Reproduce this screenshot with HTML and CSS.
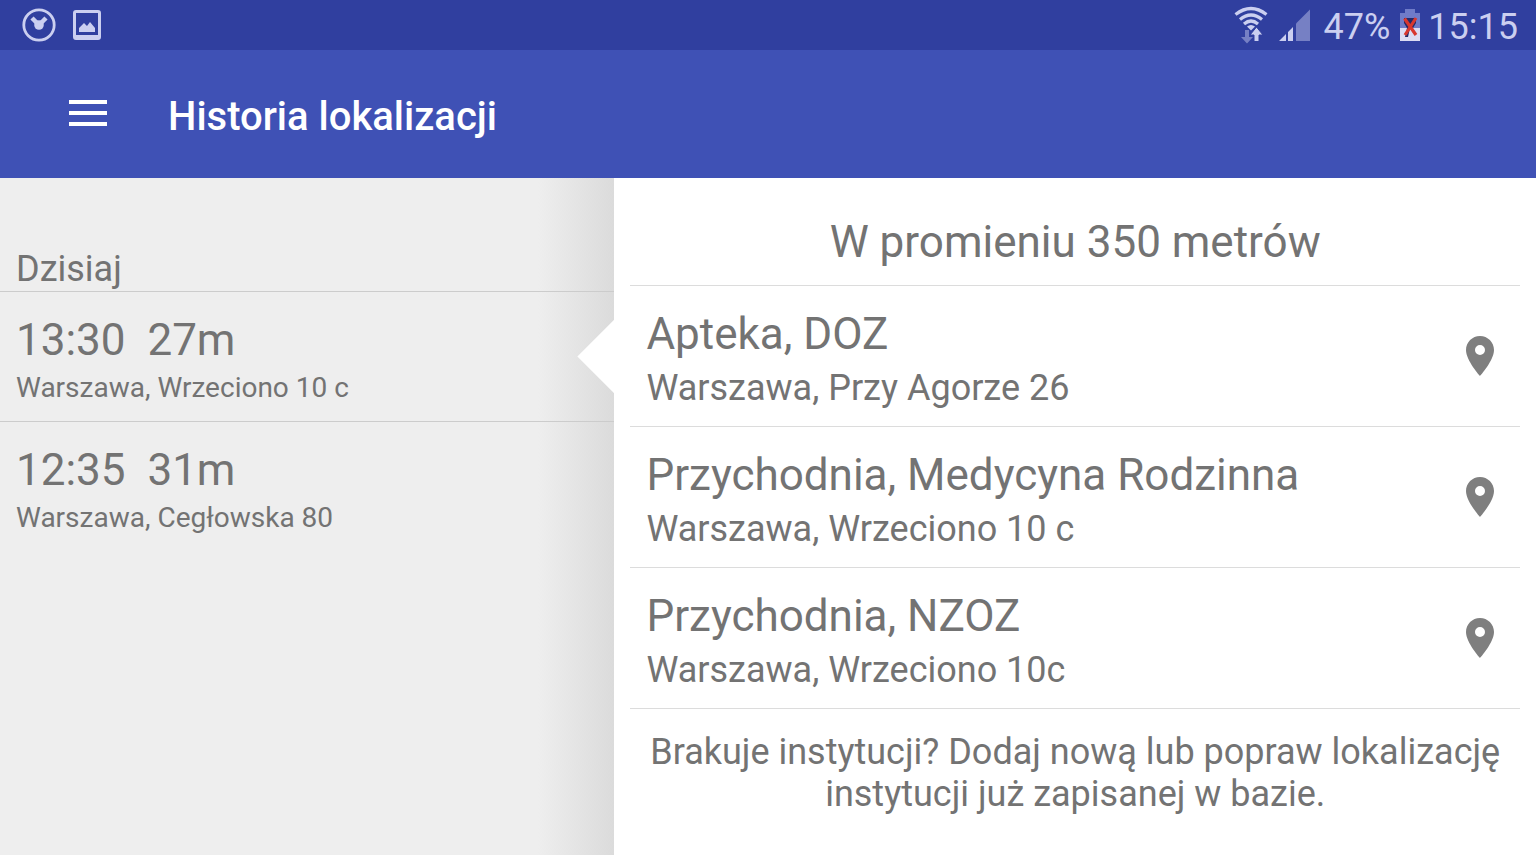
FILE: index.html
```html
<!DOCTYPE html>
<html lang="pl">
<head>
<meta charset="utf-8">
<meta name="viewport" content="width=device-width, initial-scale=1">
<title>Historia lokalizacji</title>
<link rel="stylesheet" href="styles.css">
</head>
<body>
<div class="status-bar">
  <div class="status-group status-notifications">
    <svg class="status-icon" width="34" height="34" viewBox="0 0 34 34" aria-hidden="true">
      <circle cx="17" cy="17" r="15.2" fill="none" stroke="currentColor" stroke-width="2.8"/>
      <path d="M10 10l7 7M24 10l-7 7" stroke="currentColor" stroke-width="4.500" fill="none"/>
      <circle cx="17" cy="17" r="4.800" fill="currentColor"/>
    </svg>
    <svg class="status-icon" width="28" height="32" viewBox="0 0 28 32" aria-hidden="true">
      <path fill="currentColor" fill-rule="evenodd" d="M3 1h22a3 3 0 0 1 3 3v24a3 3 0 0 1-3 3H3a3 3 0 0 1-3-3V4a3 3 0 0 1 3-3zm0 3v22h22V4z"/>
      <path fill="currentColor" d="M6 23v-4l5-5 3 3 3-4 5 6v4z"/>
    </svg>
  </div>
  <div class="status-group status-system">
    <svg class="wifi" width="36" height="38" viewBox="0 0 36 38" aria-hidden="true">
      <g fill="none" stroke="currentColor" stroke-width="3.200">
        <path d="M2.500 8.500Q18-3.500 33.500 8.500"/>
        <path d="M7 13.500Q18 4.500 29 13.500"/>
        <path d="M11 18Q18 12 25 18"/>
      </g>
      <path fill="currentColor" d="M14 20.500q4-3 8 0L18 24.500z"/>
      <path fill="#7680c4" d="M12 24h4v7h4l-6 6.500L8 31h4z"/>
      <path fill="currentColor" stroke="#303f9f" stroke-width="1" d="M21 35.500V29h-4l6.500-8 6.500 8h-4v6.500z"/>
    </svg>
    <svg class="signal" width="32" height="32" viewBox="0 0 32 32" aria-hidden="true">
      <path fill="currentColor" d="M0 32l7-7v7zM9 32V23l5-5V32z"/>
      <path fill="#7680c4" d="M17 32V14.500L31 .500V32z"/>
    </svg>
    <span class="battery-level">47%</span>
    <svg class="battery" width="20" height="32" viewBox="0 0 20 32" aria-hidden="true">
      <path fill="#6f7bc8" d="M5 0h10v4h5v28H0V4h5z"/>
      <path fill="#dcdcf2" d="M0 19h20v13H0z"/>
      <path fill="#252a68" d="M4 9h12v5l-3 5H7L4 14zM7 19h3l-2 9H5z"/>
      <path d="M4.500 9.500L16 26M16 9L5 26" fill="none" stroke="#d8372f" stroke-width="3.200"/>
    </svg>
    <time class="clock">15:15</time>
  </div>
</div>

<header class="app-bar">
  <button class="menu-button" type="button" aria-label="Menu">
    <svg width="38" height="28" viewBox="0 0 38 28" aria-hidden="true">
      <path fill="currentColor" d="M0 0h38v4H0zM0 11h38v4H0zM0 22h38v4H0z"/>
    </svg>
  </button>
  <h1 class="app-title">Historia lokalizacji</h1>
</header>

<main class="panes">
  <section class="history">
    <h2 class="day">Dzisiaj</h2>
    <ul class="list">
      <li class="visit visit-selected">
        <button class="visit-button" type="button">
          <span class="primary">13:30&nbsp; 27m</span>
          <span class="caption">Warszawa, Wrzeciono 10 c</span>
        </button>
      </li>
      <li class="visit">
        <button class="visit-button" type="button">
          <span class="primary">12:35&nbsp; 31m</span>
          <span class="caption">Warszawa, Cegłowska 80</span>
        </button>
      </li>
    </ul>
  </section>

  <section class="nearby">
    <h2 class="nearby-title">W promieniu 350 metrów</h2>
    <ul class="list">
      <li class="place">
        <div class="place-text">
          <span class="primary">Apteka, DOZ</span>
          <span class="secondary">Warszawa, Przy Agorze 26</span>
        </div>
        <button class="pin-button" type="button" aria-label="Apteka, DOZ">
          <svg width="28" height="40" viewBox="0 0 28 40" aria-hidden="true">
            <path fill="currentColor" fill-rule="evenodd" d="M14 0C6.270 0 0 6.270 0 14c0 10.500 14 26 14 26s14-15.500 14-26C28 6.270 21.730 0 14 0zm0 19a5 5 0 1 1 0-10 5 5 0 0 1 0 10z"/>
          </svg>
        </button>
      </li>
      <li class="place">
        <div class="place-text">
          <span class="primary">Przychodnia, Medycyna Rodzinna</span>
          <span class="secondary">Warszawa, Wrzeciono 10 c</span>
        </div>
        <button class="pin-button" type="button" aria-label="Przychodnia, Medycyna Rodzinna">
          <svg width="28" height="40" viewBox="0 0 28 40" aria-hidden="true">
            <path fill="currentColor" fill-rule="evenodd" d="M14 0C6.270 0 0 6.270 0 14c0 10.500 14 26 14 26s14-15.500 14-26C28 6.270 21.730 0 14 0zm0 19a5 5 0 1 1 0-10 5 5 0 0 1 0 10z"/>
          </svg>
        </button>
      </li>
      <li class="place">
        <div class="place-text">
          <span class="primary">Przychodnia, NZOZ</span>
          <span class="secondary">Warszawa, Wrzeciono 10c</span>
        </div>
        <button class="pin-button" type="button" aria-label="Przychodnia, NZOZ">
          <svg width="28" height="40" viewBox="0 0 28 40" aria-hidden="true">
            <path fill="currentColor" fill-rule="evenodd" d="M14 0C6.270 0 0 6.270 0 14c0 10.500 14 26 14 26s14-15.500 14-26C28 6.270 21.730 0 14 0zm0 19a5 5 0 1 1 0-10 5 5 0 0 1 0 10z"/>
          </svg>
        </button>
      </li>
    </ul>
    <p class="hint">Brakuje instytucji? Dodaj nową lub popraw lokalizację instytucji już zapisanej w bazie.</p>
  </section>
</main>
</body>
</html>
```
FILE: styles.css
```css
* {
  box-sizing: border-box;
}

body {
  margin: 0;
  min-height: 100vh;
  display: flex;
  flex-direction: column;
  font-family: Roboto, "Liberation Sans", sans-serif;
  color: #737373;
  background: #fff;
}

h1,
h2,
p {
  margin: 0;
  font-weight: 400;
}

svg {
  display: block;
  flex: none;
}

button {
  border: 0;
  padding: 0;
  background: none;
  color: inherit;
  font: inherit;
  text-align: left;
  cursor: pointer;
}

.status-bar {
  display: flex;
  justify-content: space-between;
  align-items: center;
  height: 50px;
  padding: 0 18px 0 22px;
  background: #303f9f;
  color: #cbcff0;
  font-size: 36px;
  line-height: 48px;
}

.status-group {
  display: flex;
  align-items: center;
}

.status-notifications {
  gap: 17px;
}

.signal {
  margin: 0 13px 0 10px;
}

.battery {
  margin: 0 8px 0 10px;
}

.battery-level,
.clock {
  padding-top: 4px;
}

.app-bar {
  display: flex;
  align-items: center;
  gap: 61px;
  height: 128px;
  padding: 0 69px;
  background: #3f51b5;
  color: #fff;
}

.app-title {
  padding-top: 6px;
  font-size: 40px;
  line-height: 48px;
  font-weight: 500;
}

.panes {
  flex: 1;
  display: grid;
  grid-template-columns: 2fr 3fr;
}

.history {
  padding-top: 70px;
  background: linear-gradient(to left, #dbdbdb, #eee 76px);
}

.day {
  padding: 0 16px;
  font-size: 36px;
  line-height: 43px;
}

.list {
  margin: 0;
  padding: 0;
  list-style: none;
}

.visit {
  position: relative;
  border-top: 1px solid #ccc;
}

.visit-selected::after {
  content: "";
  position: absolute;
  top: 50%;
  right: 0;
  width: 37px;
  height: 74px;
  background: #fff;
  clip-path: polygon(100% 0, 100% 100%, 0 50%);
  transform: translateY(-50%);
}

.visit-button {
  display: block;
  width: 100%;
  padding: 22px 16px 16px;
}

.primary,
.secondary,
.caption {
  display: block;
}

.primary {
  font-size: 44px;
  line-height: 52px;
}

.secondary {
  font-size: 36px;
  line-height: 42px;
}

.caption {
  padding-top: 5px;
  font-size: 28px;
  line-height: 34px;
}

.nearby {
  padding: 0 16px;
}

.nearby-title {
  padding: 38px 0 17px;
  font-size: 44px;
  line-height: 52px;
  text-align: center;
}

.place {
  display: flex;
  align-items: center;
  justify-content: space-between;
  padding: 0 26px 0 16px;
  border-top: 1px solid #dcdcdc;
}

.place-text {
  padding: 22px 0 17px;
}

.place .secondary {
  padding-top: 7px;
}

.pin-button {
  color: #7f7f7f;
}

.hint {
  padding: 22px 16px;
  border-top: 1px solid #dcdcdc;
  font-size: 36px;
  line-height: 42px;
  text-align: center;
}
```
